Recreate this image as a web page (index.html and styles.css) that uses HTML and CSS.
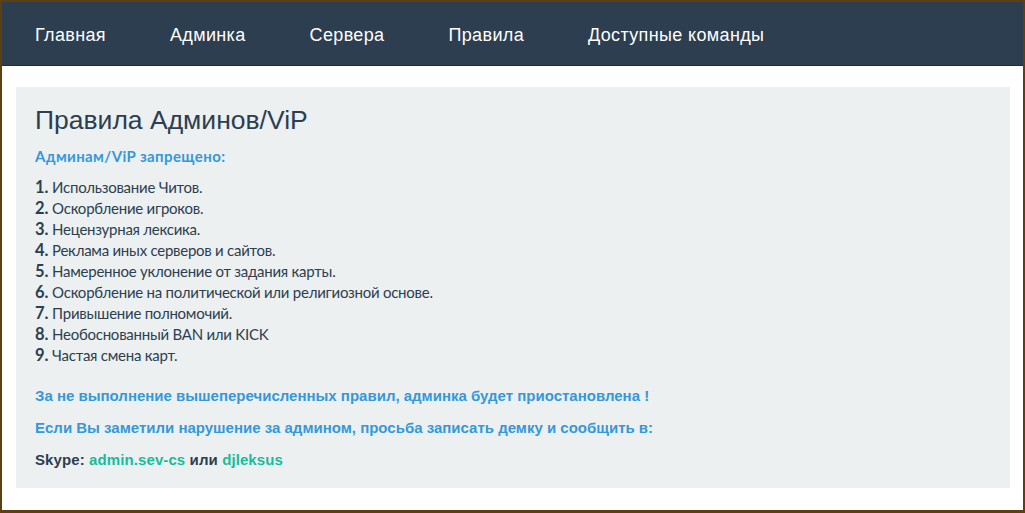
FILE: index.html
```html
<!DOCTYPE html>
<html lang="ru">

<head>
    <meta charset="UTF-8">
    <meta name="viewport" content="width=device-width, initial-scale=1.0">
    <title>Правила</title>
    <link rel="stylesheet" href="styles.css">
</head>

<body>
    <div class="frame">
        <nav class="navbar">
            <a href="#">Главная</a>
            <a href="#">Админка</a>
            <a href="#">Сервера</a>
            <a href="#">Правила</a>
            <a href="#">Доступные команды</a>
        </nav>
        <div class="container">
            <div class="well">
                <h2>Правила Админов/ViP</h2>
                <p class="info">Админам/ViP запрещено:</p>
                <div class="rules">
                    <div><b>1.</b> Использование Читов.</div>
                    <div><b>2.</b> Оскорбление игроков.</div>
                    <div><b>3.</b> Нецензурная лексика.</div>
                    <div><b>4.</b> Реклама иных серверов и сайтов.</div>
                    <div><b>5.</b> Намеренное уклонение от задания карты.</div>
                    <div><b>6.</b> Оскорбление на политической или религиозной основе.</div>
                    <div><b>7.</b> Привышение полномочий.</div>
                    <div><b>8.</b> Необоснованный BAN или KICK</div>
                    <div><b>9.</b> Частая смена карт.</div>
                </div>
                <p class="note first">За не выполнение вышеперечисленных правил, админка будет приостановлена !</p>
                <p class="note">Если Вы заметили нарушение за админом, просьба записать демку и сообщить в:</p>
                <p class="contact">Skype: <a href="#">admin.sev-cs</a> или <a href="#">djleksus</a></p>
            </div>
        </div>
    </div>
</body>

</html>
```

FILE: styles.css
```css
* {
    margin: 0;
    padding: 0;
    box-sizing: border-box;
}

body {
    background: #5e3f10;
    padding: 2px 2px 3px 2px;
    height: 513px;
    overflow: hidden;
}

.frame {
    background: #fff;
    height: 508px;
    font-family: Lato, "Liberation Sans", sans-serif;
    font-size: 15px;
    line-height: 21px;
    color: #2c3e50;
}

.navbar {
    display: flex;
    height: 64px;
    align-items: center;
    background: #2c3e50;
    border-bottom: 1px solid #1e2b38;
    padding-left: 1px;
}

.navbar a {
    font-family: "Liberation Sans", Arial, sans-serif;
    font-size: 18px;
    letter-spacing: 0.35px;
    color: #fff;
    text-decoration: none;
    padding: 4px 32px 0;
}

.container {
    padding: 21px 13px 0 14px;
}

.well {
    background: #ecf0f1;
    padding: 19px 19px 18px;
}

h2 {
    font-family: "Liberation Sans", Arial, sans-serif;
    font-weight: normal;
    font-size: 26.5px;
    line-height: 29px;
    margin-bottom: 11px;
}

.info {
    color: #3498db;
    font-weight: bold;
    letter-spacing: 0.4px;
    margin-bottom: 10px;
}

.rules div {
    letter-spacing: -0.25px;
}

.rules b {
    font-size: 16.5px;
    font-weight: bold;
    letter-spacing: 0;
}

.note,
.contact {
    font-family: "Liberation Sans", Arial, sans-serif;
    font-weight: bold;
    margin-top: 11px;
}

.note {
    color: #3498db;
}

.note.first {
    margin-top: 19px;
}

.contact {
    letter-spacing: 0.1px;
}

.contact a {
    color: #18bc9c;
    text-decoration: none;
}
```
